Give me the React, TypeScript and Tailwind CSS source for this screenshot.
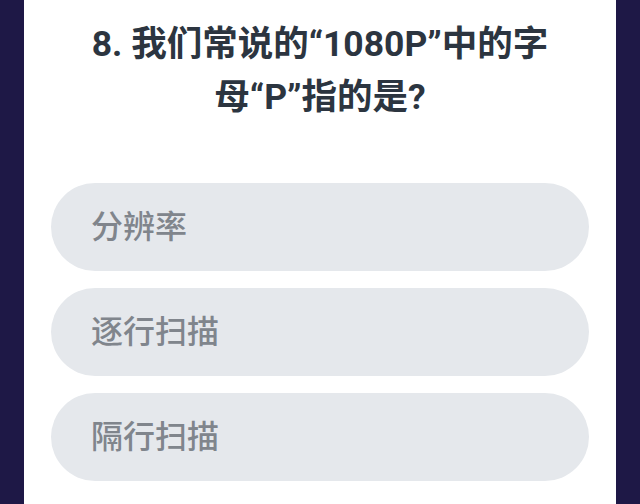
const options = ['分辨率', '逐行扫描', '隔行扫描'];

export default function App() {
  return (
    <div className="flex h-[504px] w-[640px] justify-center overflow-hidden bg-[#1e1846]">
      <div
        className="flex w-[592px] flex-col items-center bg-white"
        style={{ fontFamily: 'Roboto, "Noto Sans CJK SC", sans-serif' }}
      >
        <h1 className="mt-[18px] text-center text-[35.5px] font-bold leading-[53px] text-[#2c3540]">
          8. 我们常说的“1080P”中的字
          <br />
          母“P”指的是?
        </h1>
        <div className="mt-[59px] flex w-[538px] flex-col gap-[17px]">
          {options.map((o) => (
            <div
              key={o}
              className="flex h-[88px] items-center rounded-full bg-[#e5e8ec] pl-[40px] text-[32px] font-medium text-[#80858c]"
            >
              {o}
            </div>
          ))}
        </div>
      </div>
    </div>
  );
}
